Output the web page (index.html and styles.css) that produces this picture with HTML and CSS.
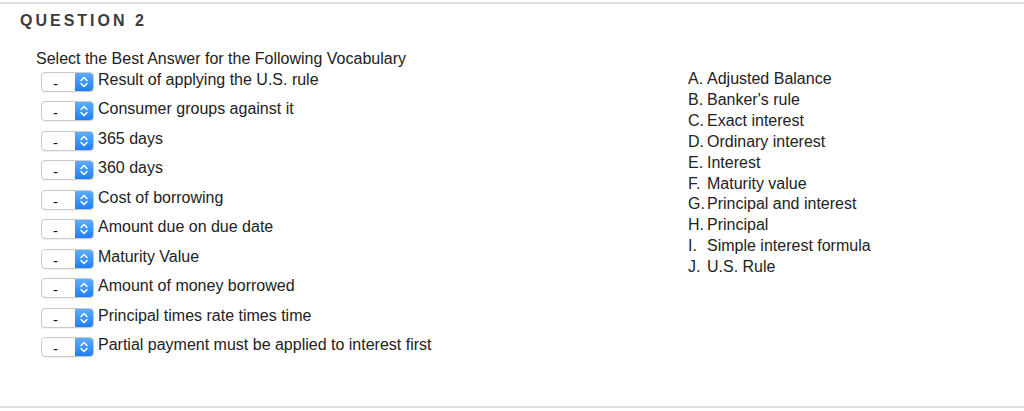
FILE: index.html
```html
<!DOCTYPE html>
<html>
<head>
<meta charset="utf-8">
<link rel="stylesheet" href="styles.css">
</head>
<body>
<div class="question">
  <h2 class="title">QUESTION 2</h2>
  <div class="body">
    <p class="prompt">Select the Best Answer for the Following Vocabulary</p>
    <div class="rows">
      <div class="row"><span class="select"><span class="sel-val">-</span><span class="sel-btn"><svg width="10" height="14" viewBox="0 0 10 14"><path d="M2 5.5 L5 2.5 L8 5.5 M2 8.5 L5 11.5 L8 8.5" fill="none" stroke="#fff" stroke-width="1.5" stroke-linecap="round" stroke-linejoin="round"/></svg></span></span><span class="term">Result of applying the U.S. rule</span></div>
      <div class="row"><span class="select"><span class="sel-val">-</span><span class="sel-btn"><svg width="10" height="14" viewBox="0 0 10 14"><path d="M2 5.5 L5 2.5 L8 5.5 M2 8.5 L5 11.5 L8 8.5" fill="none" stroke="#fff" stroke-width="1.5" stroke-linecap="round" stroke-linejoin="round"/></svg></span></span><span class="term">Consumer groups against it</span></div>
      <div class="row"><span class="select"><span class="sel-val">-</span><span class="sel-btn"><svg width="10" height="14" viewBox="0 0 10 14"><path d="M2 5.5 L5 2.5 L8 5.5 M2 8.5 L5 11.5 L8 8.5" fill="none" stroke="#fff" stroke-width="1.5" stroke-linecap="round" stroke-linejoin="round"/></svg></span></span><span class="term">365 days</span></div>
      <div class="row"><span class="select"><span class="sel-val">-</span><span class="sel-btn"><svg width="10" height="14" viewBox="0 0 10 14"><path d="M2 5.5 L5 2.5 L8 5.5 M2 8.5 L5 11.5 L8 8.5" fill="none" stroke="#fff" stroke-width="1.5" stroke-linecap="round" stroke-linejoin="round"/></svg></span></span><span class="term">360 days</span></div>
      <div class="row"><span class="select"><span class="sel-val">-</span><span class="sel-btn"><svg width="10" height="14" viewBox="0 0 10 14"><path d="M2 5.5 L5 2.5 L8 5.5 M2 8.5 L5 11.5 L8 8.5" fill="none" stroke="#fff" stroke-width="1.5" stroke-linecap="round" stroke-linejoin="round"/></svg></span></span><span class="term">Cost of borrowing</span></div>
      <div class="row"><span class="select"><span class="sel-val">-</span><span class="sel-btn"><svg width="10" height="14" viewBox="0 0 10 14"><path d="M2 5.5 L5 2.5 L8 5.5 M2 8.5 L5 11.5 L8 8.5" fill="none" stroke="#fff" stroke-width="1.5" stroke-linecap="round" stroke-linejoin="round"/></svg></span></span><span class="term">Amount due on due date</span></div>
      <div class="row"><span class="select"><span class="sel-val">-</span><span class="sel-btn"><svg width="10" height="14" viewBox="0 0 10 14"><path d="M2 5.5 L5 2.5 L8 5.5 M2 8.5 L5 11.5 L8 8.5" fill="none" stroke="#fff" stroke-width="1.5" stroke-linecap="round" stroke-linejoin="round"/></svg></span></span><span class="term">Maturity Value</span></div>
      <div class="row"><span class="select"><span class="sel-val">-</span><span class="sel-btn"><svg width="10" height="14" viewBox="0 0 10 14"><path d="M2 5.5 L5 2.5 L8 5.5 M2 8.5 L5 11.5 L8 8.5" fill="none" stroke="#fff" stroke-width="1.5" stroke-linecap="round" stroke-linejoin="round"/></svg></span></span><span class="term">Amount of money borrowed</span></div>
      <div class="row"><span class="select"><span class="sel-val">-</span><span class="sel-btn"><svg width="10" height="14" viewBox="0 0 10 14"><path d="M2 5.5 L5 2.5 L8 5.5 M2 8.5 L5 11.5 L8 8.5" fill="none" stroke="#fff" stroke-width="1.5" stroke-linecap="round" stroke-linejoin="round"/></svg></span></span><span class="term">Principal times rate times time</span></div>
      <div class="row"><span class="select"><span class="sel-val">-</span><span class="sel-btn"><svg width="10" height="14" viewBox="0 0 10 14"><path d="M2 5.5 L5 2.5 L8 5.5 M2 8.5 L5 11.5 L8 8.5" fill="none" stroke="#fff" stroke-width="1.5" stroke-linecap="round" stroke-linejoin="round"/></svg></span></span><span class="term">Partial payment must be applied to interest first</span></div>
    </div>
    <ul class="answers">
      <li><span class="lbl">A.</span><span>Adjusted Balance</span></li>
      <li><span class="lbl">B.</span><span>Banker's rule</span></li>
      <li><span class="lbl">C.</span><span>Exact interest</span></li>
      <li><span class="lbl">D.</span><span>Ordinary interest</span></li>
      <li><span class="lbl">E.</span><span>Interest</span></li>
      <li><span class="lbl">F.</span><span>Maturity value</span></li>
      <li><span class="lbl">G.</span><span>Principal and interest</span></li>
      <li><span class="lbl">H.</span><span>Principal</span></li>
      <li><span class="lbl">I.</span><span>Simple interest formula</span></li>
      <li><span class="lbl">J.</span><span>U.S. Rule</span></li>
    </ul>
  </div>
</div>
</body>
</html>
```
FILE: styles.css
```css
html, body {
  margin: 0;
  padding: 0;
  background: #fff;
}
body {
  font-family: "Liberation Sans", Arial, sans-serif;
  font-size: 16px;
  color: #222;
}
.question {
  margin-top: 2px;
  border-top: 2px solid #dedede;
  border-bottom: 2px solid #dedede;
  height: 402px;
  padding-left: 20px;
  box-sizing: content-box;
}
.title {
  margin: 7px 0 0 0;
  font-size: 16px;
  line-height: 20px;
  font-weight: bold;
  letter-spacing: 3px;
  color: #3c3c3c;
}
.body {
  display: grid;
  grid-template-columns: 652px 1fr;
  padding-left: 16px;
  margin-top: 18px;
}
.prompt {
  grid-column: 1;
  grid-row: 1;
  margin: 0;
  line-height: 20px;
}
.rows {
  grid-column: 1;
  grid-row: 2;
  display: flex;
  flex-direction: column;
  gap: 9.45px;
  margin-top: 1px;
  padding-left: 5px;
}
.row {
  display: flex;
  align-items: flex-start;
  gap: 4px;
  height: 20px;
}
.term {
  line-height: 20px;
}
.select {
  margin-top: 2px;
  display: flex;
  width: 53px;
  height: 20px;
  box-sizing: border-box;
  border: 1px solid #cacaca;
  border-radius: 4px;
  overflow: hidden;
  background: #fff;
  box-shadow: 0 1px 0 rgba(0,0,0,0.05);
}
.sel-val {
  flex: 1;
  font-size: 15px;
  line-height: 21px;
  padding-left: 11px;
  color: #111;
}
.sel-btn {
  width: 18px;
  display: flex;
  align-items: center;
  justify-content: center;
  background: linear-gradient(#5daeff, #1f7ef3);
}
.answers {
  grid-column: 2;
  grid-row: 2;
  list-style: none;
  margin: 0;
  padding: 0;
}
.answers li {
  display: flex;
  line-height: 20.9px;
}
.lbl {
  width: 19px;
  flex: none;
}
```
